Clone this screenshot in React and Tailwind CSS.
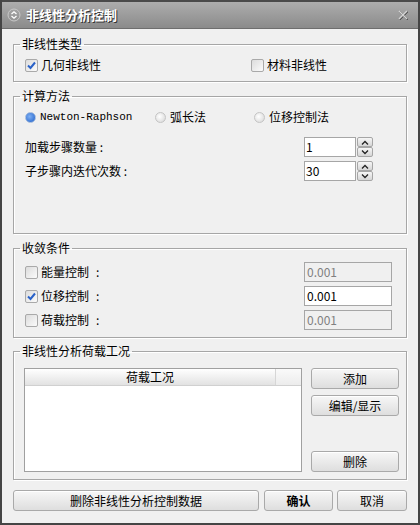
import React from "react";

const font = { fontFamily: '"Noto Sans CJK SC", "Noto Sans", sans-serif' };

const CheckBox = ({ checked }) => (
  <span className="w-[13px] h-[13px] border border-[#a9a9a9] rounded-[2px] bg-gradient-to-br from-[#dcdcdc] to-[#fbfbfb] flex items-center justify-center shrink-0">
    {checked && (
      <svg width="11" height="11" viewBox="0 0 11 11">
        <path d="M2 5.5 L4.5 8 L9 2.5" fill="none" stroke="#2a62c8" strokeWidth="2" />
      </svg>
    )}
  </span>
);

const Radio = ({ checked }) => (
  <span
    className={`w-[11px] h-[11px] rounded-full border shrink-0 ${
      checked
        ? "border-[#9fb8dc] bg-[radial-gradient(circle_at_40%_40%,#7fb0f4,#1e5fc8)]"
        : "border-[#c4c4c4] bg-[radial-gradient(circle_at_40%_40%,#ffffff,#d4d4d4)]"
    }`}
  />
);

// legend 14px 高，内容从 legend 底部开始
const GroupBox = ({ title, className = "", children }) => (
  <fieldset
    className={`border border-[#a6a6a6] shadow-[inset_1px_1px_0_#ffffff,1px_1px_0_#ffffff] mx-[11px] ${className}`}
  >
    <legend className="ml-[6px] px-[2px] text-[12px] leading-[14px] text-black">{title}</legend>
    {children}
  </fieldset>
);

const SpinBtn = ({ dir }) => (
  <span className="w-[16px] h-[10px] border border-[#a6a6a6] rounded-[2px] bg-gradient-to-b from-[#f6f6f6] to-[#d6d6d6] flex items-center justify-center">
    <svg width="8" height="5" viewBox="0 0 8 5">
      {dir === "up" ? (
        <path d="M1 4.5 L4 1.5 L7 4.5" fill="none" stroke="#222" strokeWidth="1.3" />
      ) : (
        <path d="M1 0.5 L4 3.5 L7 0.5" fill="none" stroke="#222" strokeWidth="1.3" />
      )}
    </svg>
  </span>
);

const Spin = ({ value }) => (
  <div className="flex items-center gap-[1px]">
    <div className="w-[52px] h-[20px] border border-[#a6a6a6] bg-white text-[12px] leading-[18px] pl-[1px] text-black">
      {value}
    </div>
    <div className="flex flex-col">
      <SpinBtn dir="up" />
      <SpinBtn dir="down" />
    </div>
  </div>
);

const Btn = ({ children, className = "" }) => (
  <button
    className={`h-[21px] border border-[#a9a9a9] rounded-[3px] bg-gradient-to-b from-[#f7f7f7] to-[#dedede] text-[12px] leading-[19px] text-black shadow-[inset_0_1px_0_#ffffff] ${className}`}
  >
    {children}
  </button>
);

const Convergence = ({ label, checked }) => (
  <div className="flex items-center h-[20px]">
    <div className="w-[279px] flex items-center gap-[3px]">
      <CheckBox checked={checked} />
      <span className="text-[12px] leading-[14px] text-black">{label}</span>
      <span className="text-[12px] leading-[14px] text-black ml-[4px]">:</span>
    </div>
    <div
      className={`w-[88px] h-[20px] border border-[#a6a6a6] text-[12px] leading-[18px] pl-[2px] ${
        checked ? "bg-white text-black" : "bg-[#f0f0f0] text-[#808080]"
      }`}
    >
      0.001
    </div>
  </div>
);

export default function App() {
  return (
    <div
      className="w-[420px] h-[525px] bg-[#f0f0f0] border-x-2 border-b-2 border-[#454545] flex flex-col overflow-hidden"
      style={font}
    >
      {/* 标题栏 */}
      <div className="h-[29px] shrink-0 border-t-2 border-[#4a4a4a] border-b border-b-[#6e6e6e] bg-gradient-to-b from-[#adadad] to-[#8b8b8b] flex items-center justify-between pl-[5px] pr-[10px]">
        <div className="flex items-center gap-[5px]">
          <svg width="14" height="14" viewBox="0 0 14 14">
            <circle cx="7" cy="7" r="6" fill="none" stroke="#c8c8c8" strokeWidth="1" />
            <path d="M4.5 6 L7 3.8 L9.5 6" fill="none" stroke="#ffffff" strokeWidth="1.3" />
            <path d="M4.5 8 L7 10.2 L9.5 8" fill="none" stroke="#ffffff" strokeWidth="1.3" />
          </svg>
          <span className="text-[13px] font-bold text-white [text-shadow:1px_1px_0_#333]">
            非线性分析控制
          </span>
        </div>
        <svg width="10" height="10" viewBox="0 0 10 10">
          <path d="M1 1 L9 9 M9 1 L1 9" stroke="#3e3e3e" strokeWidth="1.5" transform="translate(0.6 0.6)" />
          <path d="M1 1 L9 9 M9 1 L1 9" stroke="#d4d4d4" strokeWidth="1.5" />
        </svg>
      </div>

      {/* 非线性类型 */}
      <GroupBox title="非线性类型" className="mt-[8px]">
        <div className="h-[30px] flex items-center pl-[11px] pb-[2px]">
          <div className="w-[226px] flex items-center gap-[3px]">
            <CheckBox checked />
            <span className="text-[12px] leading-[14px] text-black">几何非线性</span>
          </div>
          <div className="flex items-center gap-[3px]">
            <CheckBox />
            <span className="text-[12px] leading-[14px] text-black">材料非线性</span>
          </div>
        </div>
      </GroupBox>

      {/* 计算方法 */}
      <GroupBox title="计算方法" className="mt-[7px]">
        <div className="h-[130px] pl-[11px] pt-[7px]">
          <div className="flex items-center h-[14px]">
            <div className="w-[130px] flex items-center gap-[4px]">
              <Radio checked />
              <span className="text-[11px] leading-[14px] text-black" style={{ fontFamily: '"Liberation Mono", monospace' }}>
                Newton-Raphson
              </span>
            </div>
            <div className="w-[99px] flex items-center gap-[4px]">
              <Radio />
              <span className="text-[12px] leading-[14px] text-black">弧长法</span>
            </div>
            <div className="flex items-center gap-[4px]">
              <Radio />
              <span className="text-[12px] leading-[14px] text-black">位移控制法</span>
            </div>
          </div>
          <div className="flex items-center mt-[13px]">
            <span className="w-[279px] text-[12px] leading-[14px] text-black">加载步骤数量 :</span>
            <Spin value="1" />
          </div>
          <div className="flex items-center mt-[4px]">
            <span className="w-[279px] text-[12px] leading-[14px] text-black">子步骤内迭代次数 :</span>
            <Spin value="30" />
          </div>
        </div>
      </GroupBox>

      {/* 收敛条件 */}
      <GroupBox title="收敛条件" className="mt-[7px]">
        <div className="h-[82px] pl-[11px] pt-[7px] flex flex-col gap-[4px]">
          <Convergence label="能量控制" />
          <Convergence label="位移控制" checked />
          <Convergence label="荷载控制" />
        </div>
      </GroupBox>

      {/* 非线性分析荷载工况 */}
      <GroupBox title="非线性分析荷载工况" className="mt-[6px]">
        <div className="h-[121px] pl-[10px] pt-[10px] flex">
          <div className="w-[278px] h-[104px] border border-[#a0a0a0] bg-white flex flex-col">
            <div className="h-[17px] flex border-b border-[#d0d0d0]">
              <div className="w-[251px] bg-gradient-to-b from-[#ffffff] to-[#e2e2e2] border-r border-[#d6d6d6] text-[12px] leading-[16px] text-center text-black">
                荷载工况
              </div>
              <div className="flex-1 bg-gradient-to-b from-[#fafafa] to-[#ececec]" />
            </div>
          </div>
          <div className="ml-[9px] w-[88px] h-[104px] flex flex-col">
            <Btn className="w-full">添加</Btn>
            <Btn className="w-full mt-[6px]">编辑/显示</Btn>
            <Btn className="w-full mt-auto">删除</Btn>
          </div>
        </div>
      </GroupBox>

      {/* 底部按钮 */}
      <div className="flex items-center mt-[10px] pl-[11px]">
        <Btn className="w-[246px]">删除非线性分析控制数据</Btn>
        <Btn className="w-[69px] ml-[5px] font-bold">确认</Btn>
        <Btn className="w-[70px] ml-[4px]">取消</Btn>
      </div>
    </div>
  );
}
